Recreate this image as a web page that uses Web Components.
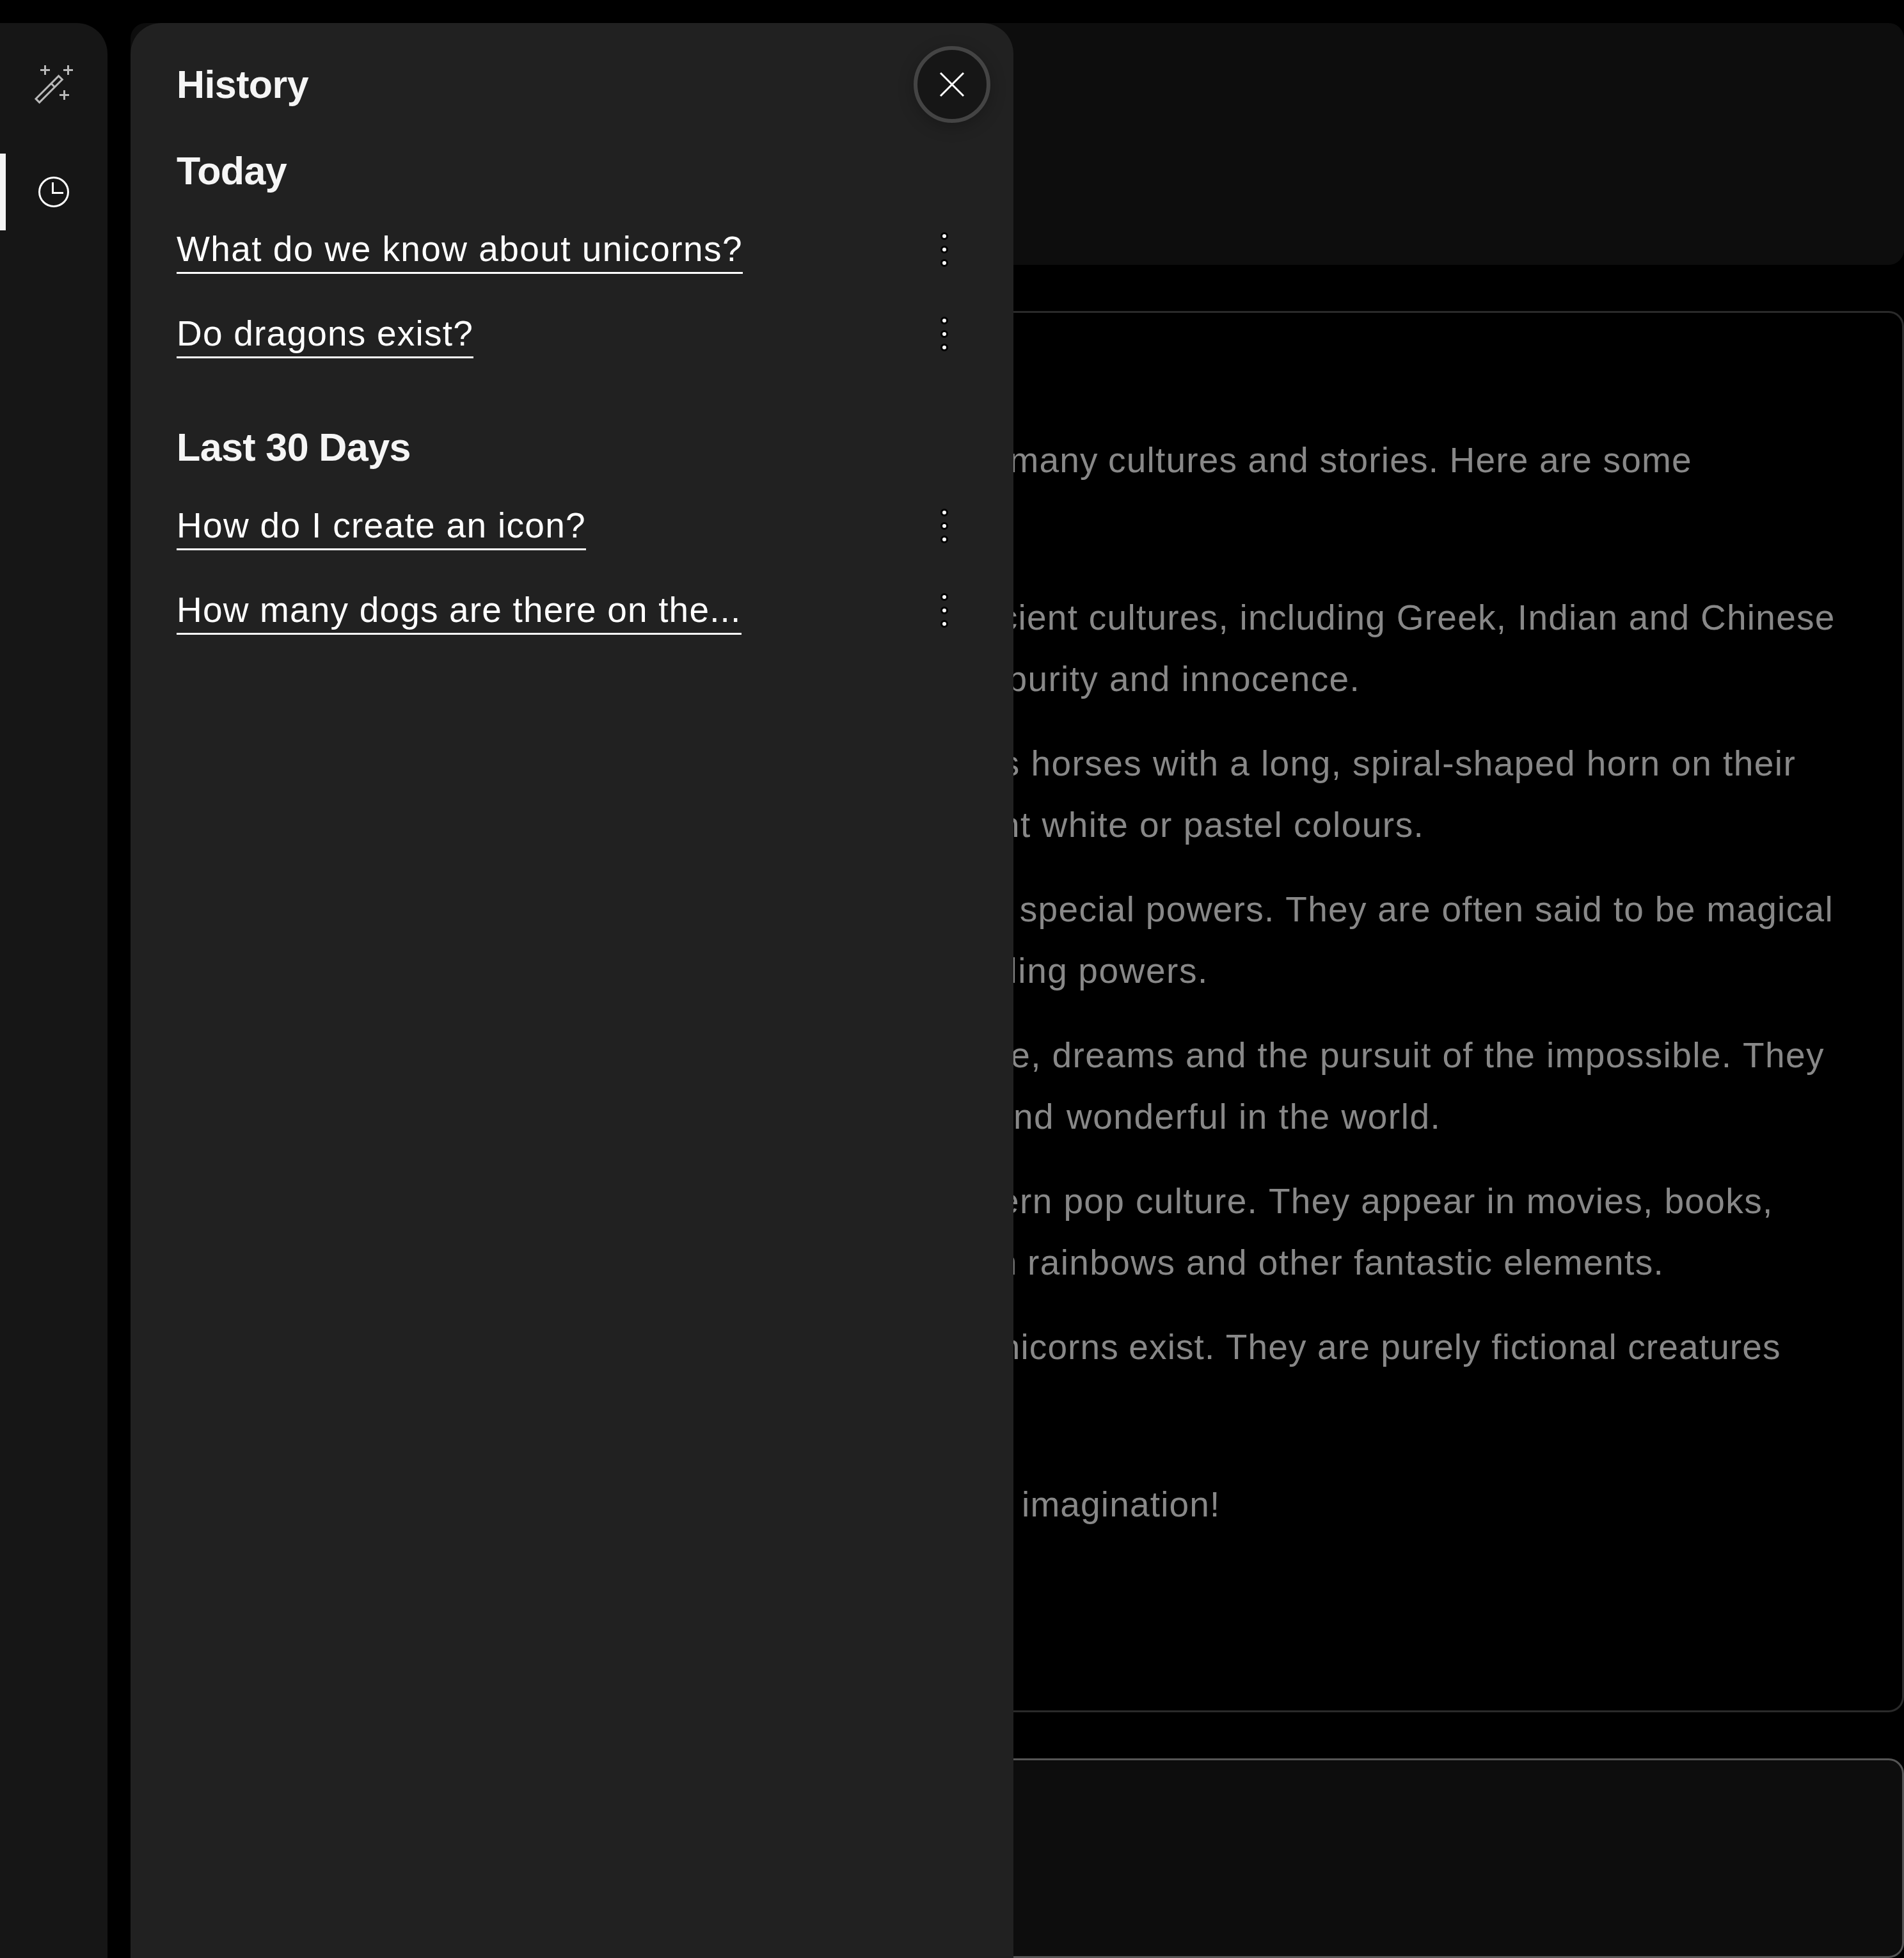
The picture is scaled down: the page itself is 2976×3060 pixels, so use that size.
<!DOCTYPE html>
<html lang="en">
<head>
<meta charset="utf-8">
<title>Chat history</title>
<style>
  html, body { margin: 0; background: #000; height: 3060px; overflow: hidden; }
  body { font-family: "Liberation Sans", Arial, sans-serif; color: #fff; }
</style>
</head>
<body>
<chat-app>
  <nav-rail slot="rail"></nav-rail>
  <history-drawer slot="drawer" heading="History">
    <history-group heading="Today">
      <history-item width="885">What do we know about unicorns?</history-item>
      <history-item width="464">Do dragons exist?</history-item>
    </history-group>
    <history-group heading="Last 30 Days">
      <history-item width="640">How do I create an icon?</history-item>
      <history-item width="882.5">How many dogs are there on the...</history-item>
    </history-group>
  </history-drawer>
  <chat-panel slot="main" kind="prompt"></chat-panel>
  <chat-panel slot="main" kind="answer">
    <answer-block tall>
      <answer-line lead="many" shift="1" from="1734.1" to="2642">cultures and stories. Here are some</answer-line>
    </answer-block>
    <answer-block>
      <answer-line lead="ancient" from="1703.8" to="2865.8">cultures, including Greek, Indian and Chinese</answer-line>
      <answer-line lead="purity" from="1735.9" to="2120.6">and innocence.</answer-line>
    </answer-block>
    <answer-block>
      <answer-line lead="as" from="1614.5" to="2805.4">horses with a long, spiral-shaped horn on their</answer-line>
      <answer-line lead="brilliant" from="1627.5" to="2220.6">white or pastel colours.</answer-line>
    </answer-block>
    <answer-block>
      <answer-line from="1594.8" to="2861.4">special powers. They are often said to be magical</answer-line>
      <answer-line lead="healing" shift="1" from="1688.3" to="1883">powers.</answer-line>
    </answer-block>
    <answer-block>
      <answer-line lead="hope," from="1646.6" to="2851">dreams and the pursuit of the impossible. They</answer-line>
      <answer-line lead="and" shift="-2" from="1666" to="2246.5">wonderful in the world.</answer-line>
    </answer-block>
    <answer-block>
      <answer-line lead="modern" from="1665.4" to="2766">pop culture. They appear in movies, books,</answer-line>
      <answer-line lead="with" shift="1.5" from="1609" to="2595.6">rainbows and other fantastic elements.</answer-line>
    </answer-block>
    <answer-block tall>
      <answer-line lead="unicorns" shift="1" from="1766.3" to="2781">exist. They are purely fictional creatures</answer-line>
    </answer-block>
    <answer-block>
      <answer-line from="1600" to="1902">imagination!</answer-line>
    </answer-block>
  </chat-panel>
  <chat-panel slot="main" kind="input"></chat-panel>
</chat-app>

<script>
const FONT = '55px "Liberation Sans"';
const pen = document.createElement('canvas').getContext('2d');
pen.font = FONT;
pen.fontKerning = 'none';

class Base extends HTMLElement {
  constructor() {
    super();
    this.attachShadow({ mode: 'open' }).innerHTML = this.view();
  }
}

customElements.define('chat-app', class extends Base {
  view() {
    return `<style>
      :host { display: flex; position: relative; gap: 36px; width: 2976px; height: 3024px; padding-top: 36px; background: #000; overflow: hidden; }
      .main { flex: 1; min-width: 0; display: flex; flex-direction: column; }
      .over { position: absolute; left: 204px; top: 36px; }
    </style>
    <slot name="rail"></slot>
    <div class="main"><slot name="main"></slot></div>
    <div class="over"><slot name="drawer"></slot></div>`;
  }
});

customElements.define('nav-rail', class extends Base {
  view() {
    return `<style>
      :host { display: flex; flex-direction: column; gap: 48px; box-sizing: border-box; width: 168px; height: 3024px; padding-top: 36px; background: #161616; border-top-right-radius: 48px; }
      .item { height: 120px; display: flex; align-items: center; justify-content: center; box-sizing: border-box; }
      .active { border-left: 9px solid #f5f5f5; padding-right: 9px; }
      svg { display: block; width: 72px; height: 72px; fill: none; stroke-width: 3; }
    </style>
    <div class="item"><svg viewBox="48 96 72 72" stroke="#b8b8b8">
      <path d="M63 109.5h15M70.5 102v15M99 109.5h15M106.5 102v15M93 148.5h15M100.5 141v15"/>
      <path d="M91.7 118.7L97.3 124.3L61.6 160.1L56 154.4ZM80 130.5L85.7 136.2"/>
    </svg></div>
    <div class="item active"><svg viewBox="48 264 72 72" stroke="#fff">
      <circle cx="84" cy="300" r="22.5"/><path d="M82.5 285v16.500h16.500"/>
    </svg></div>`;
  }
});

customElements.define('history-drawer', class extends Base {
  view() {
    return `<style>
      :host { display: flex; flex-direction: column; box-sizing: border-box; width: 1380px; height: 3024px; padding-top: 36px; background: #212121; border-radius: 48px 48px 0 0; }
      header { display: flex; align-items: center; justify-content: space-between; height: 120px; padding: 0 36px 0 72px; margin-bottom: 39px; }
      h1 { margin: 0; font-size: 61px; line-height: 72px; font-weight: 700; letter-spacing: -.6px; color: #f5f5f5; }
      button { width: 120px; height: 120px; padding: 0; border: 6px solid #444; border-radius: 50%; background: #161616; display: flex; align-items: center; justify-content: center; box-shadow: 0 6px 24px rgba(0,0,0,.25); }
      svg { display: block; width: 48px; height: 48px; }
      .groups { display: flex; flex-direction: column; gap: 75px; }
    </style>
    <header><h1>${this.getAttribute('heading')}</h1>
      <button aria-label="Close"><svg viewBox="-24 -24 48 48" stroke="#fff" stroke-width="3"><path d="M-18 -18L18 18M-18 18L18 -18"/></svg></button>
    </header>
    <div class="groups"><slot></slot></div>`;
  }
});

customElements.define('history-group', class extends Base {
  view() {
    return `<style>
      :host { display: flex; flex-direction: column; padding: 0 90px 0 72px; }
      h2 { margin: 0 0 21px; font-size: 61px; line-height: 72px; font-weight: 700; letter-spacing: -.6px; color: #f5f5f5; }
    </style><h2>${this.getAttribute('heading')}</h2><slot></slot>`;
  }
});

customElements.define('history-item', class extends Base {
  view() {
    const text = this.textContent;
    const w = +this.getAttribute('width');
    const ls = (w - pen.measureText(text).width) / text.length;
    const dot = y => `<circle cx="18" cy="${y}" r="4.5"/>`;
    return `<style>
      :host { display: flex; justify-content: space-between; align-items: flex-start; height: 132px; }
      .link { margin-top: 30px; padding-bottom: 1px; font-size: 55px; line-height: 70px; font-kerning: none; font-variant-ligatures: none; white-space: nowrap; letter-spacing: ${ls.toFixed(3)}px; width: ${w}px; border-bottom: 3px solid #fff; color: #fff; }
      svg { display: block; width: 36px; height: 132px; fill: #fff; stroke: #000; stroke-width: 3; }
    </style><div class="link"><slot></slot></div>
    <svg viewBox="0 0 36 132">${dot(45)}${dot(66)}${dot(87)}</svg>`;
  }
});

customElements.define('chat-panel', class extends Base {
  view() {
    return `<style>
      :host { display: flex; flex-direction: column; box-sizing: border-box; border-radius: 24px; }
      :host([kind="prompt"]) { height: 378px; background: #0d0d0d; margin-bottom: 72px; }
      :host([kind="answer"]) { height: 2190px; border: 3px solid #2a2a2a; padding-top: 182px; gap: 36px; margin-bottom: 72px; }
      :host([kind="input"]) { height: 312px; border: 3px solid #555; background: #0d0d0d; }
    </style><slot></slot>`;
  }
});

customElements.define('answer-block', class extends Base {
  view() {
    return `<style>
      :host { display: flex; flex-direction: column; }
      :host([tall]) { padding-bottom: 114px; }
    </style><slot></slot>`;
  }
});

customElements.define('answer-line', class extends Base {
  view() {
    const text = this.textContent, m = pen.measureText(text);
    const from = +this.getAttribute('from'), to = +this.getAttribute('to');
    const shift = +(this.getAttribute('shift') || 0);
    const ink = m.actualBoundingBoxRight + m.actualBoundingBoxLeft;
    const ls = (to - from - ink) / (text.length - 1);
    const start = from + m.actualBoundingBoxLeft - 207;
    const lead = this.getAttribute('lead');
    return `<style>
      :host { display: flex; height: 96px; font-size: 55px; line-height: 96px; font-kerning: none; font-variant-ligatures: none; white-space: pre; color: #888; letter-spacing: ${ls.toFixed(3)}px; }
      .lead { flex: none; width: ${(start + shift).toFixed(2)}px; margin-right: ${-shift}px; text-align: right; }
    </style><span class="lead">${lead ? lead + ' ' : ''}</span><span><slot></slot></span>`;
  }
});
</script>
</body>
</html>
